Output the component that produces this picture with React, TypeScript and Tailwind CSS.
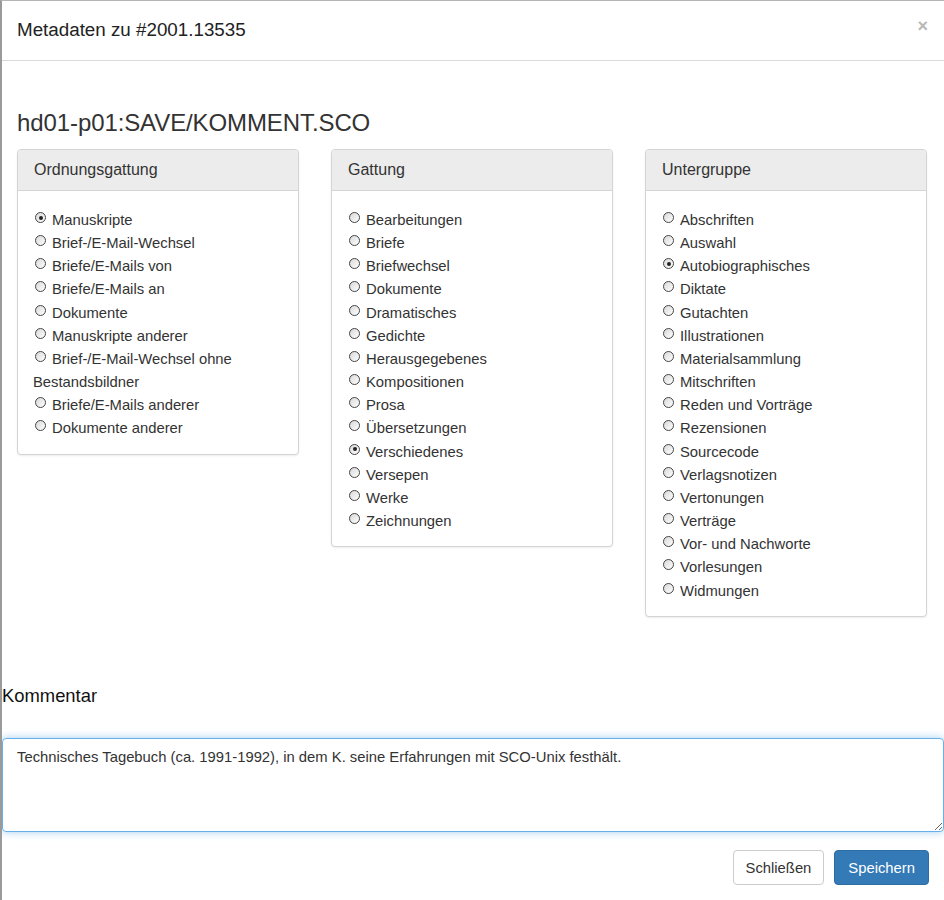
import React, { useState } from 'react';

interface Group {
  title: string;
  items: string[];
  selected: string;
}

const groups: Group[] = [
  {
    title: 'Ordnungsgattung',
    items: [
      'Manuskripte',
      'Brief-/E-Mail-Wechsel',
      'Briefe/E-Mails von',
      'Briefe/E-Mails an',
      'Dokumente',
      'Manuskripte anderer',
      'Brief-/E-Mail-Wechsel ohne Bestandsbildner',
      'Briefe/E-Mails anderer',
      'Dokumente anderer',
    ],
    selected: 'Manuskripte',
  },
  {
    title: 'Gattung',
    items: [
      'Bearbeitungen',
      'Briefe',
      'Briefwechsel',
      'Dokumente',
      'Dramatisches',
      'Gedichte',
      'Herausgegebenes',
      'Kompositionen',
      'Prosa',
      'Übersetzungen',
      'Verschiedenes',
      'Versepen',
      'Werke',
      'Zeichnungen',
    ],
    selected: 'Verschiedenes',
  },
  {
    title: 'Untergruppe',
    items: [
      'Abschriften',
      'Auswahl',
      'Autobiographisches',
      'Diktate',
      'Gutachten',
      'Illustrationen',
      'Materialsammlung',
      'Mitschriften',
      'Reden und Vorträge',
      'Rezensionen',
      'Sourcecode',
      'Verlagsnotizen',
      'Vertonungen',
      'Verträge',
      'Vor- und Nachworte',
      'Vorlesungen',
      'Widmungen',
    ],
    selected: 'Autobiographisches',
  },
];

function Radio({ checked }: { checked: boolean }) {
  return (
    <span className="relative inline-block w-[11px] h-[11px] ml-[2px] mr-[6px] -mb-[1px] rounded-full border border-[#444] bg-gradient-to-br from-[#d8d8d8] to-white align-[3px]">
      {checked && (
        <span className="absolute left-[2.5px] top-[2.5px] w-[4px] h-[4px] rounded-full bg-[#222]" />
      )}
    </span>
  );
}

function Panel({ group }: { group: Group }) {
  const [value, setValue] = useState(group.selected);
  return (
    <div className="w-[282px] self-start border border-[#d4d4d4] rounded-[4px] bg-white shadow-[0_1px_2px_rgba(0,0,0,0.08)]">
      <div className="h-[41px] px-[16px] flex items-center bg-[#ececec] border-b border-[#d4d4d4] rounded-t-[4px] text-[16px] text-[#333]">
        {group.title}
      </div>
      <div className="px-[15px] pt-[18px] pb-[13px] text-[14.8px] leading-[23.15px] text-[#333]">
        {group.items.map((item) => (
          <div key={item} className="cursor-pointer" onClick={() => setValue(item)}>
            <Radio checked={value === item} />
            {item}
          </div>
        ))}
      </div>
    </div>
  );
}

export default function App() {
  const [comment, setComment] = useState(
    'Technisches Tagebuch (ca. 1991-1992), in dem K. seine Erfahrungen mit SCO-Unix festhält.'
  );

  return (
    <div className="w-[944px] h-[900px] bg-white border-l-2 border-t border-l-[#9a9a9a] border-t-[#b5b5b5] font-['Liberation_Sans',Arial,sans-serif] text-[#333] overflow-hidden">
      {/* Header */}
      <div className="h-[60px] flex items-center justify-between pl-[15px] pr-[16px] border-b border-[#d9d9d9]">
        <h4 className="text-[18.8px] text-[#222]">Metadaten zu #2001.13535</h4>
        <span className="text-[18px] font-bold text-[#b8b8b8] leading-none -mt-[10px]">×</span>
      </div>

      {/* Body */}
      <div className="pt-[49px]">
        <h3 className="pl-[15px] text-[24px] leading-[26px] text-[#333] tracking-[-0.1px]">hd01-p01:SAVE/KOMMENT.SCO</h3>
        <div className="mt-[13px] pl-[15px] flex gap-[32px]">
          {groups.map((g) => (
            <Panel key={g.title} group={g} />
          ))}
        </div>

        <div className="mt-[65px] text-[18.4px] text-[#111]">Kommentar</div>
        <textarea
          className="mt-[29px] block w-[942px] h-[94px] px-[14px] py-[8px] text-[14.8px] leading-[20px] text-[#333] border border-[#66afe9] rounded-[4px] shadow-[0_0_8px_rgba(102,175,233,0.6)] outline-none resize-y font-['Liberation_Sans',Arial,sans-serif]"
          value={comment}
          onChange={(e) => setComment(e.target.value)}
        />

        <div className="mt-[18px] pr-[15px] flex justify-end gap-[10px]">
          <button className="h-[35px] px-[12px] text-[14.8px] text-[#333] bg-white border border-[#ccc] rounded-[4px]">
            Schließen
          </button>
          <button className="h-[35px] px-[13px] text-[14.8px] text-white bg-[#337ab7] border border-[#2e6da4] rounded-[4px]">
            Speichern
          </button>
        </div>
      </div>
    </div>
  );
}
